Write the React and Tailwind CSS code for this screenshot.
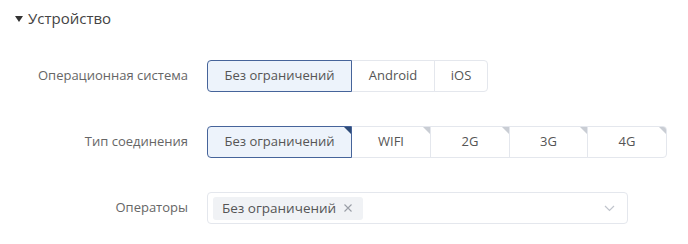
import React, { useState } from 'react'

const OS = ['Без ограничений', 'Android', 'iOS']
const NET = [
  { label: 'Без ограничений', w: 'w-[145px]' },
  { label: 'WIFI', w: 'w-[80px]' },
  { label: '2G', w: 'w-[80px]' },
  { label: '3G', w: 'w-[79px]' },
  { label: '4G', w: 'w-[80px]' },
]

function Corner({ active }) {
  return (
    <span
      className={
        'absolute top-0 right-0 w-0 h-0 border-t-[7px] border-l-[7px] border-l-transparent ' +
        (active ? 'border-t-[#2d4a78]' : 'border-t-[#c9cdd4]')
      }
    />
  )
}

export default function App() {
  const [os, setOs] = useState(0)
  const [net, setNet] = useState(0)

  return (
    <div
      className="w-[688px] h-[244px] bg-white text-[13px] text-[#555]"
      style={{ fontFamily: '"Open Sans", "Noto Sans", sans-serif' }}
    >
      {/* Header */}
      <div className="flex items-center pl-[15px] pt-[8px] h-[21px] box-content">
        <span className="w-0 h-0 border-t-[6px] border-t-[#333] border-l-[4px] border-l-transparent border-r-[4px] border-r-transparent mr-[5px]" />
        <span className="text-[15px] text-[#444] leading-none">Устройство</span>
      </div>

      <div className="flex flex-col gap-[34px] mt-[31px]">
        {/* OS */}
        <div className="flex items-center">
          <div className="w-[188px] text-right text-[#666]">Операционная система</div>
          <div className="ml-[19px] flex h-[32px]">
            {OS.map((o, i) => (
              <button
                key={o}
                onClick={() => setOs(i)}
                className={
                  'h-full flex items-center justify-center border -ml-px first:ml-0 first:rounded-l-[4px] last:rounded-r-[4px] ' +
                  (i === 0 ? 'w-[145px] ' : i === 1 ? 'w-[84px] ' : 'w-[54px] ') +
                  (os === i
                    ? 'relative z-10 border-[#46649a] bg-[#edf3fb] text-[#555]'
                    : 'border-[#e4e7ed] bg-white text-[#555]')
                }
              >
                {o}
              </button>
            ))}
          </div>
        </div>

        {/* Network */}
        <div className="flex items-center">
          <div className="w-[188px] text-right text-[#666]">Тип соединения</div>
          <div className="ml-[19px] flex h-[32px]">
            {NET.map((n, i) => (
              <button
                key={n.label}
                onClick={() => setNet(i)}
                className={
                  'relative h-full flex items-center justify-center border -ml-px first:ml-0 first:rounded-l-[4px] last:rounded-r-[4px] overflow-hidden ' +
                  n.w +
                  ' ' +
                  (net === i
                    ? 'z-10 border-[#46649a] bg-[#edf3fb]'
                    : 'border-[#e4e7ed] bg-white')
                }
              >
                {n.label}
                <Corner active={net === i} />
              </button>
            ))}
          </div>
        </div>

        {/* Operators */}
        <div className="flex items-center">
          <div className="w-[188px] text-right text-[#666]">Операторы</div>
          <div className="ml-[19px] w-[421px] h-[32px] border border-[#e4e7ed] rounded-[4px] flex items-center pl-[5px] pr-[12px]">
            <span className="h-[23px] bg-[#f0f2f5] rounded-[3px] flex items-center pl-[9px] pr-[10px] text-[13.5px] text-[#555]">
              Без ограничений
              <svg width="10" height="10" viewBox="0 0 10 10" className="ml-[7px]">
                <path d="M1.5 1.5L8.5 8.5M8.5 1.5L1.5 8.5" stroke="#9a9ea6" strokeWidth="1.1" />
              </svg>
            </span>
            <svg width="11" height="7" viewBox="0 0 11 7" className="ml-auto">
              <path d="M1 1L5.5 5.5L10 1" stroke="#c0c4cc" strokeWidth="1.2" fill="none" />
            </svg>
          </div>
        </div>
      </div>
    </div>
  )
}
